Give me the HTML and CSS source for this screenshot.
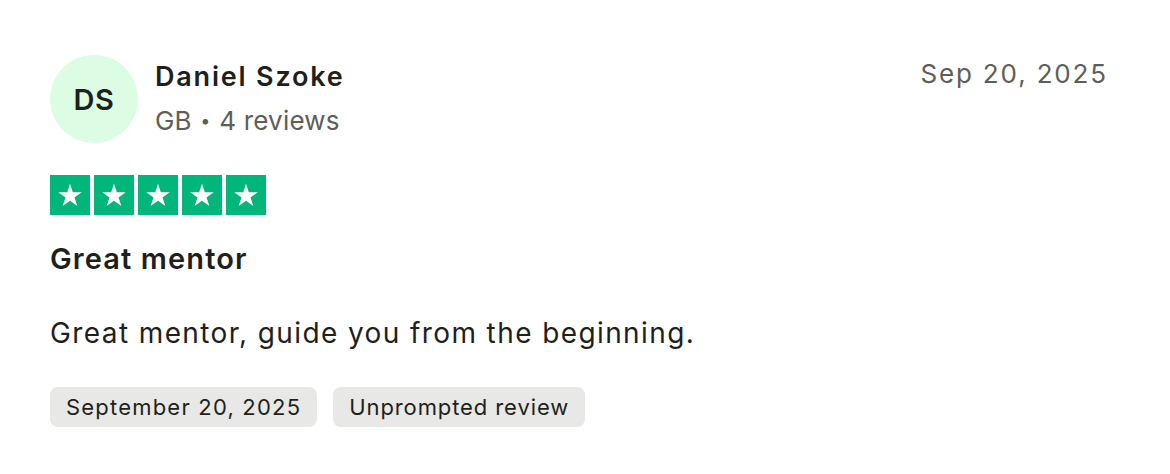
FILE: index.html
```html
<!DOCTYPE html>
<html>
<head>
  <meta charset="UTF-8">
  <title>Review</title>
  <link rel="stylesheet" href="styles.css">
</head>
<body>
<div class="review">
  <div class="header">
    <div class="avatar">DS</div>
    <div class="who">
      <div class="name">Daniel Szoke</div>
      <div class="meta">GB <span class="dot">•</span> 4 reviews</div>
    </div>
    <div class="date">Sep 20, 2025</div>
  </div>
  <div class="stars">
    <span class="star"><svg viewBox="0 0 24 24"><path d="M12 3.5l2.1 6.4h6.7l-5.4 3.9 2.1 6.4L12 16.3l-5.5 3.9 2.1-6.4-5.4-3.9h6.7z"/></svg></span>
    <span class="star"><svg viewBox="0 0 24 24"><path d="M12 3.5l2.1 6.4h6.7l-5.4 3.9 2.1 6.4L12 16.3l-5.5 3.9 2.1-6.4-5.4-3.9h6.7z"/></svg></span>
    <span class="star"><svg viewBox="0 0 24 24"><path d="M12 3.5l2.1 6.4h6.7l-5.4 3.9 2.1 6.4L12 16.3l-5.5 3.9 2.1-6.4-5.4-3.9h6.7z"/></svg></span>
    <span class="star"><svg viewBox="0 0 24 24"><path d="M12 3.5l2.1 6.4h6.7l-5.4 3.9 2.1 6.4L12 16.3l-5.5 3.9 2.1-6.4-5.4-3.9h6.7z"/></svg></span>
    <span class="star"><svg viewBox="0 0 24 24"><path d="M12 3.5l2.1 6.4h6.7l-5.4 3.9 2.1 6.4L12 16.3l-5.5 3.9 2.1-6.4-5.4-3.9h6.7z"/></svg></span>
  </div>
  <h2 class="title">Great mentor</h2>
  <p class="text">Great mentor, guide you from the beginning.</p>
  <div class="tags">
    <span class="tag tag-date">September 20, 2025</span>
    <span class="tag">Unprompted review</span>
  </div>
</div>
</body>
</html>
```
FILE: styles.css
```css
body {
  margin: 0;
  background: #fff;
  font-family: Inter, "Liberation Sans", sans-serif;
  color: #1f1f1c;
}

.review {
  padding: 55px 62px 0 50px;
}

.header {
  display: flex;
  align-items: flex-start;
}

.avatar {
  width: 88px;
  height: 88px;
  border-radius: 50%;
  background: #dcfce3;
  color: #1f1f1c;
  font-size: 29px;
  font-weight: 600;
  letter-spacing: 0.5px;
  display: flex;
  align-items: center;
  justify-content: center;
  flex-shrink: 0;
}

.who {
  margin-left: 17px;
  flex: 1;
}

.name {
  font-size: 27px;
  font-weight: 600;
  line-height: 44px;
  letter-spacing: 1.8px;
}

.meta {
  margin-top: 4px;
  font-size: 26px;
  line-height: 36px;
  color: #5e5e58;
  letter-spacing: 0.2px;
}

.meta .dot {
  font-size: 18px;
  vertical-align: 3px;
  margin: 0 1px;
}

.date {
  font-size: 26px;
  line-height: 37px;
  color: #5e5e58;
  letter-spacing: 1.85px;
}

.stars {
  display: flex;
  gap: 4px;
  margin-top: 32px;
}

.star {
  width: 40px;
  height: 40px;
  background: #00b67a;
  display: flex;
  align-items: center;
  justify-content: center;
}

.star svg {
  width: 32px;
  height: 32px;
  fill: #fff;
}

.title {
  margin: 24px 0 0;
  font-size: 29px;
  font-weight: 600;
  line-height: 40px;
  letter-spacing: 1.1px;
}

.text {
  margin: 34px 0 0;
  font-size: 28px;
  line-height: 40px;
  letter-spacing: 1.4px;
}

.tags {
  display: flex;
  gap: 16px;
  margin-top: 34px;
}

.tag {
  background: #e8e8e6;
  border-radius: 8px;
  padding: 0 16px;
  font-size: 22px;
  line-height: 40px;
  letter-spacing: 0.9px;
}

.tag-date {
  letter-spacing: 1.2px;
}
```
